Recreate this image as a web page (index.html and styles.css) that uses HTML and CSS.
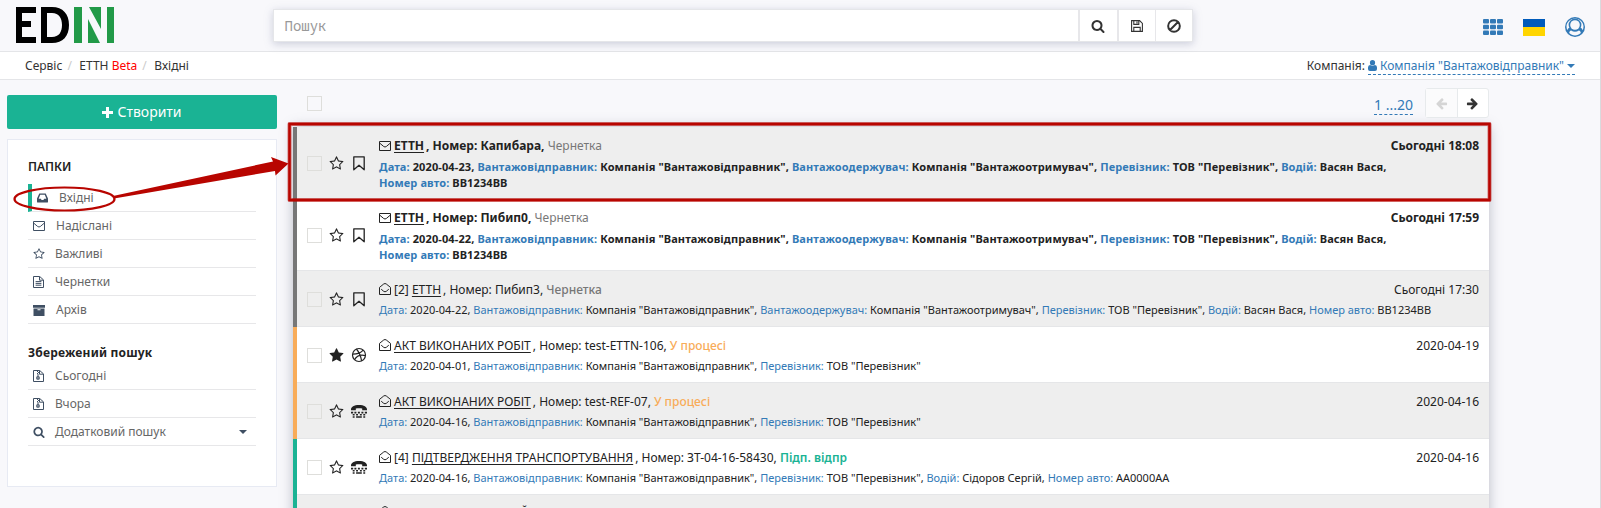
FILE: index.html
```html
<!DOCTYPE html>
<html lang="uk">
<head>
<meta charset="utf-8">
<title>EDIN</title>
<link rel="stylesheet" href="styles.css">
</head>
<body>
<svg class="defs" aria-hidden="true">
  <symbol id="search" viewBox="0 0 1792 1792"><path d="M1216 832q0-185-131.500-316.500t-316.500-131.500-316.500 131.500-131.500 316.500 131.500 316.500 316.500 131.500 316.500-131.500 131.500-316.500zm512 832q0 52-38 90t-90 38q-54 0-90-38l-343-342q-179 124-399 124-143 0-273.500-55.500t-225-150-150-225-55.500-273.500 55.500-273.500 150-225 225-150 273.500-55.500 273.500 55.500 225 150 150 225 55.500 273.500q0 220-124 399l343 343q37 37 37 90z"/></symbol>
  <symbol id="star-o" viewBox="0 0 1792 1792"><path d="M1201 1004l306-297-422-62-189-382-189 382-422 62 306 297-73 421 378-199 377 199zm527-357q0 22-26 48l-363 354 86 500q1 7 1 20 0 50-41 50-19 0-40-12l-449-236-449 236q-22 12-40 12-21 0-31.500-14.500t-10.500-35.500q0-6 2-20l86-500-364-354q-25-27-25-48 0-37 56-46l502-73 225-455q19-41 49-41t49 41l225 455 502 73q56 9 56 46z"/></symbol>
  <symbol id="star" viewBox="0 0 1792 1792"><path d="M1728 647q0 22-26 48l-363 354 86 500q1 7 1 20 0 21-10.500 35.500t-30.500 14.500q-19 0-40-12l-449-236-449 236q-22 12-40 12-21 0-31.500-14.500t-10.500-35.500q0-6 2-20l86-500-364-354q-25-27-25-48 0-37 56-46l502-73 225-455q19-41 49-41t49 41l225 455 502 73q56 9 56 46z"/></symbol>
  <symbol id="arrow" viewBox="0 0 1792 1792"><path d="M1600 960q0 54-37 91l-651 651q-39 37-91 37-51 0-90-37l-75-75q-38-38-38-91t38-91l293-293h-704q-52 0-84.500-37.500t-32.500-90.500v-128q0-53 32.500-90.500t84.500-37.500h704l-293-294q-38-36-38-90t38-90l75-75q38-38 90-38 53 0 91 38l651 651q37 35 37 90z"/></symbol>
  <symbol id="bookmark" viewBox="0 0 12 15"><path d="M.8.800h10.400v13L6 9.300.8 13.800z" fill="none" stroke="currentColor" stroke-width="1.300" stroke-linejoin="round"/></symbol>
  <symbol id="ball" viewBox="0 0 16 16"><g fill="none" stroke="currentColor" stroke-width="1.200"><circle cx="8" cy="8" r="6.500"/><path d="M5.400 2C8 5 9.800 9 10.600 13.900M1.600 7.200c4.400 0 8.100-.8 10.500-4M3.500 12.800C5.600 9 9.500 7.300 14.400 8.600"/></g></symbol>
  <symbol id="tty" viewBox="0 0 16 13"><path d="M0 4.600C0 1.800 3 0 8 0s8 1.800 8 4.600v.600h-4.800V3.600C9.200 3 6.800 3 4.800 3.600v1.600H0z"/><path d="M0 6.700h2.200v1.700H0zM3.400 6.700h2v1.700h-2zM6.900 6.700h2v1.700h-2zM10.400 6.700h2v1.700h-2zM13.800 6.700H16v1.700h-2.200zM1.700 9h1.900v1.500H1.700zM5.100 9H7v1.500H5.100zM8.900 9h1.900v1.500H8.900zM12.300 9h1.900v1.500h-1.900zM1.700 11.200h1.900v1.600H1.700zM5.100 11.200h5.700v1.600H5.100zM12.300 11.200h1.900v1.600h-1.900z"/></symbol>
  <symbol id="mail" viewBox="0 0 12 10"><path d="M.5.500h11v9H.5zM.8 2.200l3.900 3.300q1.300 1 2.600 0l3.900-3.300" fill="none" stroke="currentColor" stroke-linejoin="round"/></symbol>
  <symbol id="mail-open" viewBox="0 0 12 12"><path d="M.5 4.400L4.700 1Q6 0 7.300 1l4.200 3.400v7.100H.5zM2.200 6.200l2.500 2.100q1.300 1 2.600 0l2.500-2.100" fill="none" stroke="currentColor" stroke-linejoin="round"/></symbol>
  <symbol id="inbox" viewBox="0 0 12 10"><path fill-rule="evenodd" d="M2.500 0h7L12 5.500V9q0 1-1 1H1q-1 0-1-1V5.500zM3.500 1.500L1.800 5.700h2.400l.8 1.500h2l.8-1.500h2.400L8.500 1.500z"/></symbol>
  <symbol id="file" viewBox="0 0 11 12"><path d="M.5.500h6.200l3.800 3.400v7.600H.5zM6.500.700v3.500h3.800M2.600 5.600h5.800M2.600 7.400h5.800M2.600 9.200h5.800" fill="none" stroke="currentColor"/></symbol>
  <symbol id="zip" viewBox="0 0 11 12"><path d="M.5.500h6.200l3.800 3.400v7.600H.5zM6.500.700v3.500h3.800" fill="none" stroke="currentColor"/><path d="M4 1h1v1H4zM5 2h1v1H5zM4 3h1v1H4zM4.500 4h1v2h-1z"/><circle cx="5" cy="7.900" r="1.200" fill="none" stroke="currentColor" stroke-width="1.300"/></symbol>
  <symbol id="archive" viewBox="0 0 12 11"><path fill-rule="evenodd" d="M0 0h12v2.700H0zM.5 3.400h11V11H.5zM4.500 4.300v1h3v-1z"/></symbol>
  <symbol id="floppy" viewBox="0 0 12 12"><path d="M.6.600h8l2.800 2.800v8H.6zM2.800.600v3.800h5V.6M2.800 11.400V7.400h6.400v4M6 1.600v1.800" fill="none" stroke="currentColor" stroke-width="1.100"/></symbol>
  <symbol id="ban" viewBox="0 0 12 12"><path d="M11 6A5 5 0 1 1 1 6a5 5 0 0 1 10 0zM2.600 9.400l6.800-6.800" fill="none" stroke="currentColor" stroke-width="1.700"/></symbol>
</svg>

<header class="top">
  <svg class="logo" viewBox="0 0 98 36" role="img" aria-label="EDIN"><path d="M0 0h20v6H6v8h9v6H6v10h14v6H0z"/><path fill-rule="evenodd" d="M25 0h11c11 0 17 7 17 18s-6 18-17 18H25zM31 6v24h5c7 0 10-5 10-12S43 6 36 6z"/><path fill="#229a48" d="M58 0h8v36h-8zM73 0h12v22zM72 12l12 24H72zM91 0h7v36h-7z"/></svg>
  <div class="search">
    <div class="search-input">Пошук</div>
    <div class="search-btn wide"><svg width="14" height="14"><use href="#search"/></svg></div>
    <div class="search-btn"><svg width="12" height="12"><use href="#floppy"/></svg></div>
    <div class="search-btn last"><svg width="14" height="14"><use href="#ban"/></svg></div>
  </div>
  <div class="tools">
    <svg width="20" height="16" viewBox="0 0 20 16"><g><rect width="6" height="4.600" rx="1"/><rect x="7" width="6" height="4.600" rx="1"/><rect x="14" width="6" height="4.600" rx="1"/><rect y="5.700" width="6" height="4.600" rx="1"/><rect x="7" y="5.700" width="6" height="4.600" rx="1"/><rect x="14" y="5.700" width="6" height="4.600" rx="1"/><rect y="11.400" width="6" height="4.600" rx="1"/><rect x="7" y="11.400" width="6" height="4.600" rx="1"/><rect x="14" y="11.400" width="6" height="4.600" rx="1"/></g></svg>
    <div class="flag"></div>
    <svg width="20" height="20" viewBox="0 0 20 20"><circle cx="10" cy="10" r="10"/><path fill="#f8f8fb" d="M10 1.400c4.800 0 8.500 3.800 8.500 8.200 0 1.500-.3 2.600-.9 3.700-.5-1.600-1.500-2.600-2.900-2.700h-9.400c-1.400.1-2.400 1.100-2.900 2.700-.6-1.100-.9-2.200-.9-3.700C1.500 5.200 5.200 1.400 10 1.400z"/><circle cx="10" cy="8" r="6.400"/><circle cx="10" cy="8" r="4.800" fill="#f8f8fb"/><path fill="#f8f8fb" d="M4.200 16c.2-1.400.9-2.300 1.900-2.500 2.500 1.600 5.300 1.600 7.800 0 1 .2 1.700 1.100 1.900 2.500-3.300 3.200-8.300 3.200-11.600 0z"/></svg>
  </div>
</header>

<nav class="crumbs">
  <div class="path"><span>Сервіс</span><i>/</i><span>ЕТТН <b>Beta</b></span><i>/</i><span>Вхідні</span></div>
  <div class="company"><span>Компанія:</span><a><svg width="9" height="11" viewBox="0 0 9 11"><circle cx="4.500" cy="2.700" r="2.600"/><path d="M0 9V7.500Q0 5 2 5q2.500 1.300 5 0 2 0 2 2.500V9q0 2-2 2H2Q0 11 0 9z"/></svg>Компанія "Вантажовідправник"<em class="caret"></em></a></div>
</nav>

<main class="page">
  <aside class="side">
    <div class="create"><svg width="11" height="11" viewBox="0 0 11 11"><path d="M4 0h3v4h4v3H7v4H4V7H0V4h4z"/></svg>Створити</div>
    <div class="panel">
      <h3>ПАПКИ</h3>
      <div class="item active"><svg width="11" height="10"><use href="#inbox"/></svg><span>Вхідні</span></div>
      <div class="item"><svg width="12" height="10"><use href="#mail"/></svg><span>Надіслані</span></div>
      <div class="item"><svg width="12" height="12"><use href="#star-o"/></svg><span class="t1">Важливі</span></div>
      <div class="item"><svg width="11" height="12"><use href="#file"/></svg><span>Чернетки</span></div>
      <div class="item"><svg width="12" height="11"><use href="#archive"/></svg><span>Архів</span></div>
      <h3 class="saved">Збережений пошук</h3>
      <div class="item"><svg width="11" height="12"><use href="#zip"/></svg><span>Сьогодні</span></div>
      <div class="item"><svg width="11" height="12"><use href="#zip"/></svg><span>Вчора</span></div>
      <div class="item"><svg width="12" height="12"><use href="#search"/></svg><span class="t1">Додатковий пошук</span><em class="caret"></em></div>
    </div>
  </aside>

  <section class="content">
    <div class="bar">
      <div class="check"></div>
      <a class="range">1 ...20</a>
      <div class="pager"><div class="off"><svg class="flip" width="13" height="13"><use href="#arrow"/></svg></div><div><svg width="13" height="13"><use href="#arrow"/></svg></div></div>
    </div>
    <div class="list">
      <div class="row new odd draft">
        <div class="check"></div><svg class="star" width="15" height="15"><use href="#star-o"/></svg><svg class="kind" width="16" height="15"><use href="#bookmark"/></svg>
        <div class="body"><div class="head"><div><svg class="env" width="12" height="10"><use href="#mail"/></svg><u>ЕТТН</u>, Номер: Капибара, <s>Чернетка</s></div><time>Сьогодні 18:08</time></div>
        <p><q>Дата:</q> 2020-04-23, <q>Вантажовідправник:</q> Компанія "Вантажовідправник", <q>Вантажоодержувач:</q> Компанія "Вантажоотримувач", <q>Перевізник:</q> ТОВ "Перевізник", <q>Водій:</q> Васян Вася,<br><q>Номер авто:</q> ВВ1234ВВ</p></div>
      </div>
      <div class="row new draft">
        <div class="check"></div><svg class="star" width="15" height="15"><use href="#star-o"/></svg><svg class="kind" width="16" height="15"><use href="#bookmark"/></svg>
        <div class="body"><div class="head"><div><svg class="env" width="12" height="10"><use href="#mail"/></svg><u>ЕТТН</u>, Номер: Пибип0, <s>Чернетка</s></div><time>Сьогодні 17:59</time></div>
        <p><q>Дата:</q> 2020-04-22, <q>Вантажовідправник:</q> Компанія "Вантажовідправник", <q>Вантажоодержувач:</q> Компанія "Вантажоотримувач", <q>Перевізник:</q> ТОВ "Перевізник", <q>Водій:</q> Васян Вася,<br><q>Номер авто:</q> ВВ1234ВВ</p></div>
      </div>
      <div class="row odd draft">
        <div class="check"></div><svg class="star" width="15" height="15"><use href="#star-o"/></svg><svg class="kind" width="16" height="15"><use href="#bookmark"/></svg>
        <div class="body"><div class="head"><div><svg class="env" width="12" height="12"><use href="#mail-open"/></svg>[2] <u>ЕТТН</u>, Номер: Пибип3, <s>Чернетка</s></div><time>Сьогодні 17:30</time></div>
        <p><q>Дата:</q> 2020-04-22, <q>Вантажовідправник:</q> Компанія "Вантажовідправник", <q>Вантажоодержувач:</q> Компанія "Вантажоотримувач", <q>Перевізник:</q> ТОВ "Перевізник", <q>Водій:</q> Васян Вася, <q>Номер авто:</q> ВВ1234ВВ</p></div>
      </div>
      <div class="row process">
        <div class="check"></div><svg class="star" width="15" height="15"><use href="#star"/></svg><svg class="kind" width="16" height="16"><use href="#ball"/></svg>
        <div class="body"><div class="head"><div><svg class="env" width="12" height="12"><use href="#mail-open"/></svg><u>АКТ ВИКОНАНИХ РОБІТ</u>, Номер: test-ETTN-106, <s>У процесі</s></div><time>2020-04-19</time></div>
        <p><q>Дата:</q> 2020-04-01, <q>Вантажовідправник:</q> Компанія "Вантажовідправник", <q>Перевізник:</q> ТОВ "Перевізник"</p></div>
      </div>
      <div class="row odd process">
        <div class="check"></div><svg class="star" width="15" height="15"><use href="#star-o"/></svg><svg class="kind" width="16" height="13"><use href="#tty"/></svg>
        <div class="body"><div class="head"><div><svg class="env" width="12" height="12"><use href="#mail-open"/></svg><u>АКТ ВИКОНАНИХ РОБІТ</u>, Номер: test-REF-07, <s>У процесі</s></div><time>2020-04-16</time></div>
        <p><q>Дата:</q> 2020-04-16, <q>Вантажовідправник:</q> Компанія "Вантажовідправник", <q>Перевізник:</q> ТОВ "Перевізник"</p></div>
      </div>
      <div class="row signed">
        <div class="check"></div><svg class="star" width="15" height="15"><use href="#star-o"/></svg><svg class="kind" width="16" height="13"><use href="#tty"/></svg>
        <div class="body"><div class="head"><div><svg class="env" width="12" height="12"><use href="#mail-open"/></svg>[4] <u>ПІДТВЕРДЖЕННЯ ТРАНСПОРТУВАННЯ</u>, Номер: ЗТ-04-16-58430, <s>Підп. відпр</s></div><time>2020-04-16</time></div>
        <p><q>Дата:</q> 2020-04-16, <q>Вантажовідправник:</q> Компанія "Вантажовідправник", <q>Перевізник:</q> ТОВ "Перевізник", <q>Водій:</q> Сідоров Сергій, <q>Номер авто:</q> АА0000АА</p></div>
      </div>
      <div class="row odd signed">
        <div class="check"></div><svg class="star" width="15" height="15"><use href="#star-o"/></svg><svg class="kind" width="16" height="13"><use href="#tty"/></svg>
        <div class="body"><div class="head"><div><svg class="env" width="12" height="12"><use href="#mail-open"/></svg><u>ТРАНСПОРТУВАЛЬНИЙ</u></div></div></div>
      </div>
    </div>
  </section>
</main>

<svg class="marks" width="1601" height="508" viewBox="0 0 1601 508">
  <g fill="none" stroke="#b80500"><rect x="289.500" y="124" width="1200" height="76" stroke-width="4" stroke-opacity=".5" stroke-linejoin="round"/><rect x="289.500" y="124" width="1200" height="76" stroke-width="2.500"/><ellipse cx="64.500" cy="199" rx="50" ry="11.500" stroke-width="2.200"/></g>
  <path fill="#b80500" d="M113 196L273 161.500 271 157 288.500 163.500 275.500 175.500 275 171 114 198.500z"/>
</svg>
</body>
</html>
```
FILE: styles.css
```css
* { box-sizing: border-box; }
html, body { height: 508px; overflow: hidden; }
body {
  position: relative;
  margin: 0;
  background: #f8f8fb;
  border-right: 1px solid #d9dadd;
  font: 12px/18.57px "Noto Sans", "Open Sans", sans-serif;
  color: #333;
}
svg { display: block; fill: currentColor; flex: none; }
.defs { position: absolute; width: 0; height: 0; }

.top {
  height: 52px;
  display: flex;
  align-items: flex-start;
  border-bottom: 1px solid #e4e5e8;
}
.logo { width: 98px; height: 36px; margin: 7px 0 0 16px; color: #000; }
.search {
  display: flex;
  width: 920px;
  height: 33px;
  margin: 9px 0 0 158.5px;
  background: #fff;
  border: 1px solid #e5e6e9;
  box-shadow: 0 2px 8px rgba(120, 125, 160, .35);
}
.search-input {
  flex: 1;
  padding: 0 11px;
  font: 14px/31px "Noto Sans Mono", "DejaVu Sans Mono", monospace;
  color: #999;
}
.search-btn {
  width: 38px;
  display: flex;
  align-items: center;
  justify-content: center;
  border-left: 2px solid #e7e7ea;
}
.search-btn.wide { width: 39px; }
.search-btn.last { width: 37px; border-left-width: 1px; }
.tools {
  display: flex;
  align-items: center;
  gap: 20px;
  margin: 17px 15px 0 auto;
  color: #337ab7;
}
.flag { width: 22px; height: 17px; background: linear-gradient(#005bbb 50%, #ffd500 50%); }

.crumbs {
  height: 28px;
  display: flex;
  justify-content: space-between;
  padding: 5px 25px 0;
  background: #fff;
  border-bottom: 1px solid #e4e5e8;
}
.path { display: flex; }
.path i { padding: 0 7.5px 0 5px; font-style: normal; color: #ccc; }
.path b { font-weight: 400; color: #f00; }
.company { display: flex; gap: 3px; }
.company a {
  display: flex;
  align-items: center;
  gap: 3px;
  height: 18px;
  border-bottom: 1px dashed #337ab7;
  color: #337ab7;
  line-height: 18px;
}
.caret {
  border: 4px solid transparent;
  border-top-color: currentColor;
  border-bottom: 0;
}

.page { display: flex; }
.side { width: 270px; margin: 15px 0 0 7px; }
.create {
  height: 34px;
  display: flex;
  align-items: center;
  justify-content: center;
  gap: 4px;
  padding-top: 1px;
  border-radius: 2px;
  background: #1ab394;
  color: #fff;
  font-size: 14px;
}
.panel {
  height: 348px;
  margin-top: 10px;
  padding: 17px 20px 0;
  background: #fff;
  border: 1px solid #e7eaf3;
}
.panel h3 { margin: 0 0 7px; font-size: 12px; font-weight: 600; line-height: 20px; color: #222; }
.panel .saved { margin: 19px 0 0; font-weight: 700; letter-spacing: .2px; line-height: 19px; }
.item {
  height: 28px;
  display: flex;
  align-items: center;
  padding: 1px 9px 0 5px;
  border-bottom: 1px solid #e7e7e9;
  color: #3f4f63;
}
.item.active { border-left: 4px solid #1ab394; }
.item span { margin-left: 11px; color: #666; }
.item .t1 { margin-left: 10px; }
.item .caret { margin-left: auto; }

.content { width: 1196px; margin-left: 16px; }
.bar { height: 47.400px; display: flex; align-items: flex-start; padding-left: 14px; }
.check { width: 15px; height: 15px; flex: none; border: 1px solid #dededb; }
.bar .check { margin-top: 16px; }
.range {
  margin: 14px 12px 0 auto;
  height: 21px;
  border-bottom: 1px dashed #337ab7;
  font-size: 14px;
  line-height: 21px;
  color: #337ab7;
}
.pager { display: flex; width: 64px; height: 30px; margin-top: 8px; border: 1px solid #e7eaec; border-radius: 3px; background: #fff; }
.pager div { flex: 1; display: flex; align-items: center; justify-content: center; }
.pager .off { color: #d5d5d5; background: #fbfbfc; border-right: 1px solid #e7eaec; }
.flip { transform: scaleX(-1); }

.list { box-shadow: 0 0 12px rgba(90, 95, 120, .4); }
.row {
  height: 55.9px;
  display: flex;
  align-items: center;
  padding: 0 10px;
  background: #fff;
  border-left: 4px solid #777;
  box-shadow: inset 0 -1px #e5e6e8;
  color: #222;
}
.row.new { height: 72px; font-weight: 700; }
.row.odd { background: #eee; }
.row.process { border-left-color: #f8ac59; }
.row.signed { border-left-color: #1ab394; }
.star { margin-left: 7px; }
.kind { margin-left: 7px; }
.body { flex: 1; align-self: flex-start; margin-left: 12px; padding-top: 9.5px; }
.head { display: flex; justify-content: space-between; }
.env { display: inline-block; margin-right: 3px; vertical-align: -1px; }
.body u { margin-right: 2px; text-decoration: underline; text-underline-offset: 2px; }
.body s { text-decoration: none; font-weight: 500; color: #777; }
.new .body s { font-weight: 400; }
.process .body s { color: #f8ac59; }
.signed .body s { color: #1ab394; font-weight: 600; }
.body p { margin: 2.500px 0 0; font-size: 11px; line-height: 15.79px; }
.new .body p { letter-spacing: .11px; margin-top: 3.500px; }
.body q { quotes: none; color: #337ab7; }

.marks { position: absolute; left: 0; top: 0; pointer-events: none; }
```
